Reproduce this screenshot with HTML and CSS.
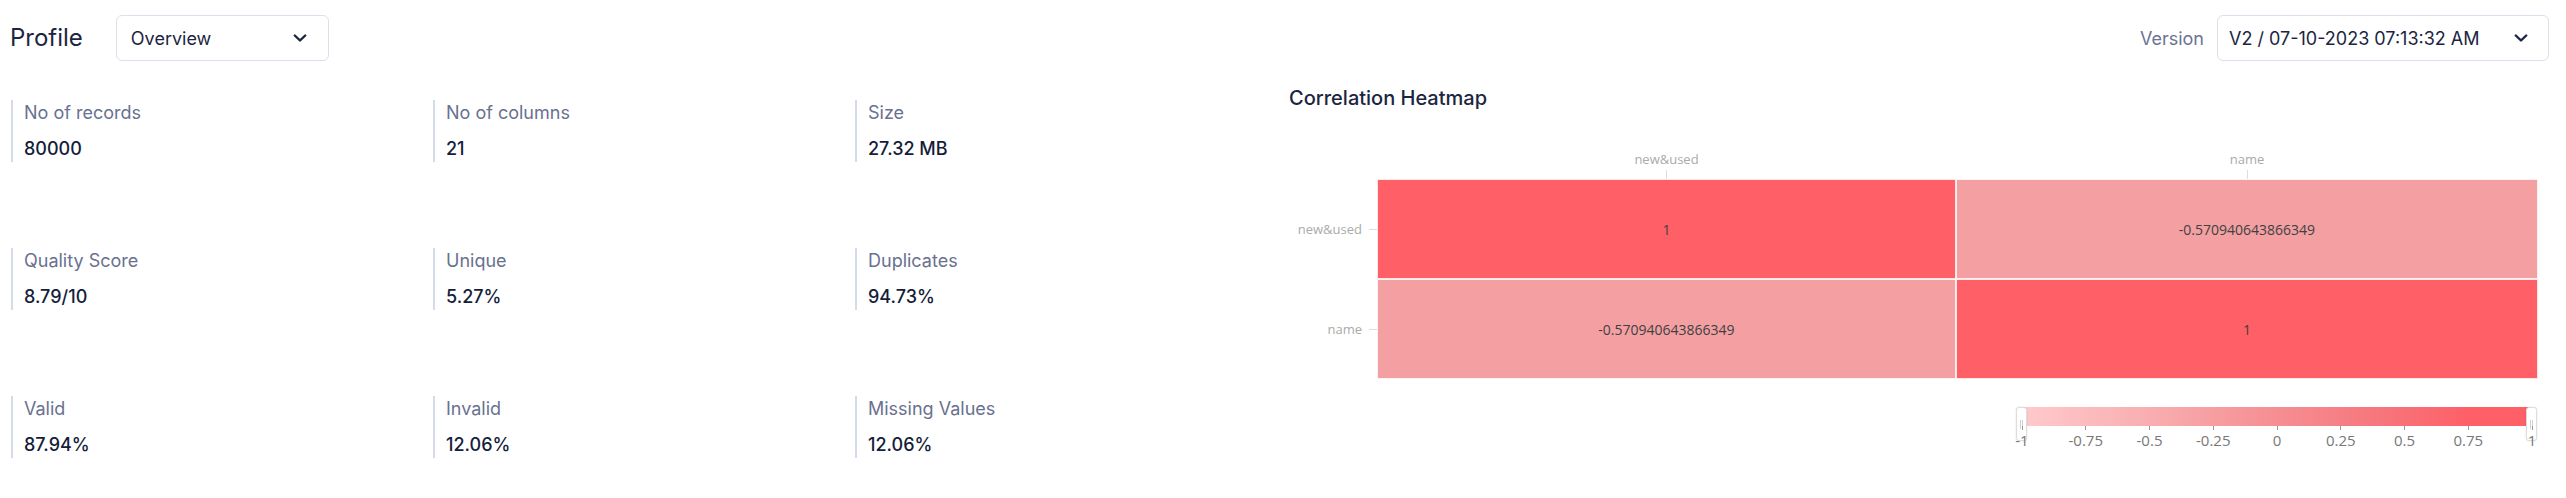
FILE: index.html
```html
<!DOCTYPE html>
<html lang="en">
<head>
<meta charset="utf-8">
<title>Profile</title>
<link rel="stylesheet" href="styles.css">
</head>
<body>
<div class="page">
  <header class="topbar">
    <div class="topbar-left">
      <h1 class="page-title">Profile</h1>
      <div class="select select-view">
        <span>Overview</span>
        <svg class="chev" viewBox="0 0 14 8" width="14" height="8"><path d="M1.8 1.5l5.2 5 5.2-5" fill="none" stroke="#1b2541" stroke-width="2.4" stroke-linecap="round" stroke-linejoin="round"/></svg>
      </div>
    </div>
    <div class="topbar-right">
      <span class="version-label">Version</span>
      <div class="select select-version">
        <span>V2 / 07-10-2023 07:13:32 AM</span>
        <svg class="chev" viewBox="0 0 14 8" width="14" height="8"><path d="M1.8 1.5l5.2 5 5.2-5" fill="none" stroke="#1b2541" stroke-width="2.4" stroke-linecap="round" stroke-linejoin="round"/></svg>
      </div>
    </div>
  </header>

  <main class="content">
    <section class="stats">
      <div class="stat"><div class="stat-label">No of records</div><div class="stat-value">80000</div></div>
      <div class="stat"><div class="stat-label">No of columns</div><div class="stat-value">21</div></div>
      <div class="stat"><div class="stat-label">Size</div><div class="stat-value">27.32 MB</div></div>
      <div class="stat"><div class="stat-label">Quality Score</div><div class="stat-value">8.79/10</div></div>
      <div class="stat"><div class="stat-label">Unique</div><div class="stat-value">5.27%</div></div>
      <div class="stat"><div class="stat-label">Duplicates</div><div class="stat-value">94.73%</div></div>
      <div class="stat"><div class="stat-label">Valid</div><div class="stat-value">87.94%</div></div>
      <div class="stat"><div class="stat-label">Invalid</div><div class="stat-value">12.06%</div></div>
      <div class="stat"><div class="stat-label">Missing Values</div><div class="stat-value">12.06%</div></div>
    </section>

    <section class="heatmap-panel">
      <h2 class="panel-title">Correlation Heatmap</h2>
      <div class="heatmap">
        <div class="corner"></div>
        <div class="col-label"><span>new&amp;used</span><i class="tick-v"></i></div>
        <div class="col-label"><span>name</span><i class="tick-v"></i></div>

        <div class="row-label"><span>new&amp;used</span><i class="tick-h"></i></div>
        <div class="cell strong">1</div>
        <div class="cell light">-0.570940643866349</div>

        <div class="row-label"><span>name</span><i class="tick-h"></i></div>
        <div class="cell light">-0.570940643866349</div>
        <div class="cell strong">1</div>
      </div>

      <div class="scale">
        <div class="scale-bar"></div>
        <div class="scale-ticks">
          <div class="scale-tick"><i></i><span>-1</span></div>
          <div class="scale-tick"><i></i><span>-0.75</span></div>
          <div class="scale-tick"><i></i><span>-0.5</span></div>
          <div class="scale-tick"><i></i><span>-0.25</span></div>
          <div class="scale-tick"><i></i><span>0</span></div>
          <div class="scale-tick"><i></i><span>0.25</span></div>
          <div class="scale-tick"><i></i><span>0.5</span></div>
          <div class="scale-tick"><i></i><span>0.75</span></div>
          <div class="scale-tick"><i></i><span>1</span></div>
        </div>
        <div class="handle handle-left"></div>
        <div class="handle handle-right"></div>
      </div>
    </section>
  </main>
</div>
</body>
</html>
```

FILE: styles.css
```css
html, body {
  margin: 0;
  padding: 0;
  background: #ffffff;
}

body {
  font-family: "Inter", "Liberation Sans", sans-serif;
  color: #1b2541;
}

.page {
  width: 2566px;
}

/* ---------- top bar ---------- */
.topbar {
  display: flex;
  justify-content: space-between;
  align-items: center;
  padding: 15px 17px 0 10px;
}

.topbar-left,
.topbar-right {
  display: flex;
  align-items: center;
}

.topbar-left {
  gap: 33px;
}

.topbar-right {
  gap: 13px;
}

.page-title {
  margin: 0;
  font-size: 24px;
  line-height: 30px;
  font-weight: 400;
  color: #1b2541;
}

.version-label {
  font-size: 18px;
  color: #6b7394;
}

.select {
  box-sizing: border-box;
  height: 46px;
  display: flex;
  align-items: center;
  justify-content: space-between;
  border: 1px solid #dbe0ec;
  border-radius: 6px;
  background: #ffffff;
  font-size: 18px;
  color: #1b2541;
}

.select-view {
  width: 213px;
  padding: 0 21px 0 14px;
}

.select-version {
  width: 332px;
  padding: 0 20px 0 11px;
}

.chev {
  display: block;
  flex: none;
}

/* ---------- content ---------- */
.content {
  display: flex;
  margin-top: 25px;
}

.stats {
  flex: 0 0 1289px;
  box-sizing: border-box;
  display: grid;
  grid-template-columns: repeat(3, 422px);
  row-gap: 86px;
  align-content: start;
  padding: 14px 0 0 11px;
}

.stat {
  border-left: 2px solid #d6dbe9;
  padding-left: 11px;
}

.stat-label {
  font-size: 18px;
  line-height: 26px;
  color: #69718f;
}

.stat-value {
  margin-top: 10px;
  font-size: 18px;
  line-height: 26px;
  font-weight: 500;
  color: #141d3a;
}

/* ---------- heatmap ---------- */
.heatmap-panel {
  flex: 1;
}

.panel-title {
  margin: 0;
  font-size: 20px;
  line-height: 24px;
  font-weight: 500;
  color: #1b2541;
}

.heatmap {
  margin-top: 40px;
  display: grid;
  grid-template-columns: 88px 579px 582px;
  grid-template-rows: 29px 100px 100px;
  font-family: "Open Sans", "Noto Sans", sans-serif;
}

.col-label {
  display: flex;
  flex-direction: column;
  align-items: center;
  justify-content: flex-end;
  gap: 2px;
  font-size: 13px;
  line-height: 18px;
  color: #aaaaaa;
}

.tick-v {
  display: block;
  width: 1px;
  height: 9px;
  background: #dddddd;
}

.row-label {
  display: flex;
  align-items: center;
  justify-content: flex-end;
  gap: 7px;
  font-size: 13px;
  line-height: 18px;
  color: #aaaaaa;
}

.tick-h {
  display: block;
  width: 8px;
  height: 1px;
  background: #dddddd;
}

.cell {
  box-sizing: border-box;
  display: flex;
  align-items: center;
  justify-content: center;
  border: 1px solid rgba(255, 255, 255, 0.85);
  font-size: 14px;
  color: #404040;
}

.cell.strong {
  background: #ff5f67;
}

.cell.light {
  background: #f4a0a3;
}

/* ---------- visual map scale ---------- */
.scale {
  position: relative;
  width: 521px;
  height: 50px;
  margin: 28px 0 0 727px;
  font-family: "Open Sans", "Noto Sans", sans-serif;
}

.scale-bar {
  margin: 7px 5px 0 6px;
  height: 19px;
  background: linear-gradient(to right, #ffcacc 0%, #f8aeb0 25%, #f58e92 50%, #f6747a 72%, #ff5f67 88%, #ff5f67 100%);
}

.scale-ticks {
  position: relative;
  z-index: 2;
  display: flex;
  justify-content: space-between;
  margin: 0 5px 0 6px;
}

.scale-tick {
  width: 0;
  display: flex;
  flex-direction: column;
  align-items: center;
}

.scale-tick i {
  display: block;
  width: 1px;
  height: 4px;
  background: #999999;
}

.scale-tick span {
  white-space: nowrap;
  font-size: 15px;
  line-height: 20px;
  color: #777777;
}

.handle {
  position: absolute;
  z-index: 1;
  top: 0;
  box-sizing: border-box;
  width: 11px;
  height: 34px;
  background: #ffffff;
  border: 1px solid #dddddd;
  border-radius: 3px;
  box-shadow: 0 0 2px rgba(0, 0, 0, 0.12);
}

.handle::before,
.handle::after {
  content: "";
  position: absolute;
  top: 12px;
  width: 1px;
  height: 9px;
  background: #d0d0d0;
}

.handle::before { left: 3px; }
.handle::after { left: 5px; }

.handle-left { left: 0; }
.handle-right { right: 0; }
```
